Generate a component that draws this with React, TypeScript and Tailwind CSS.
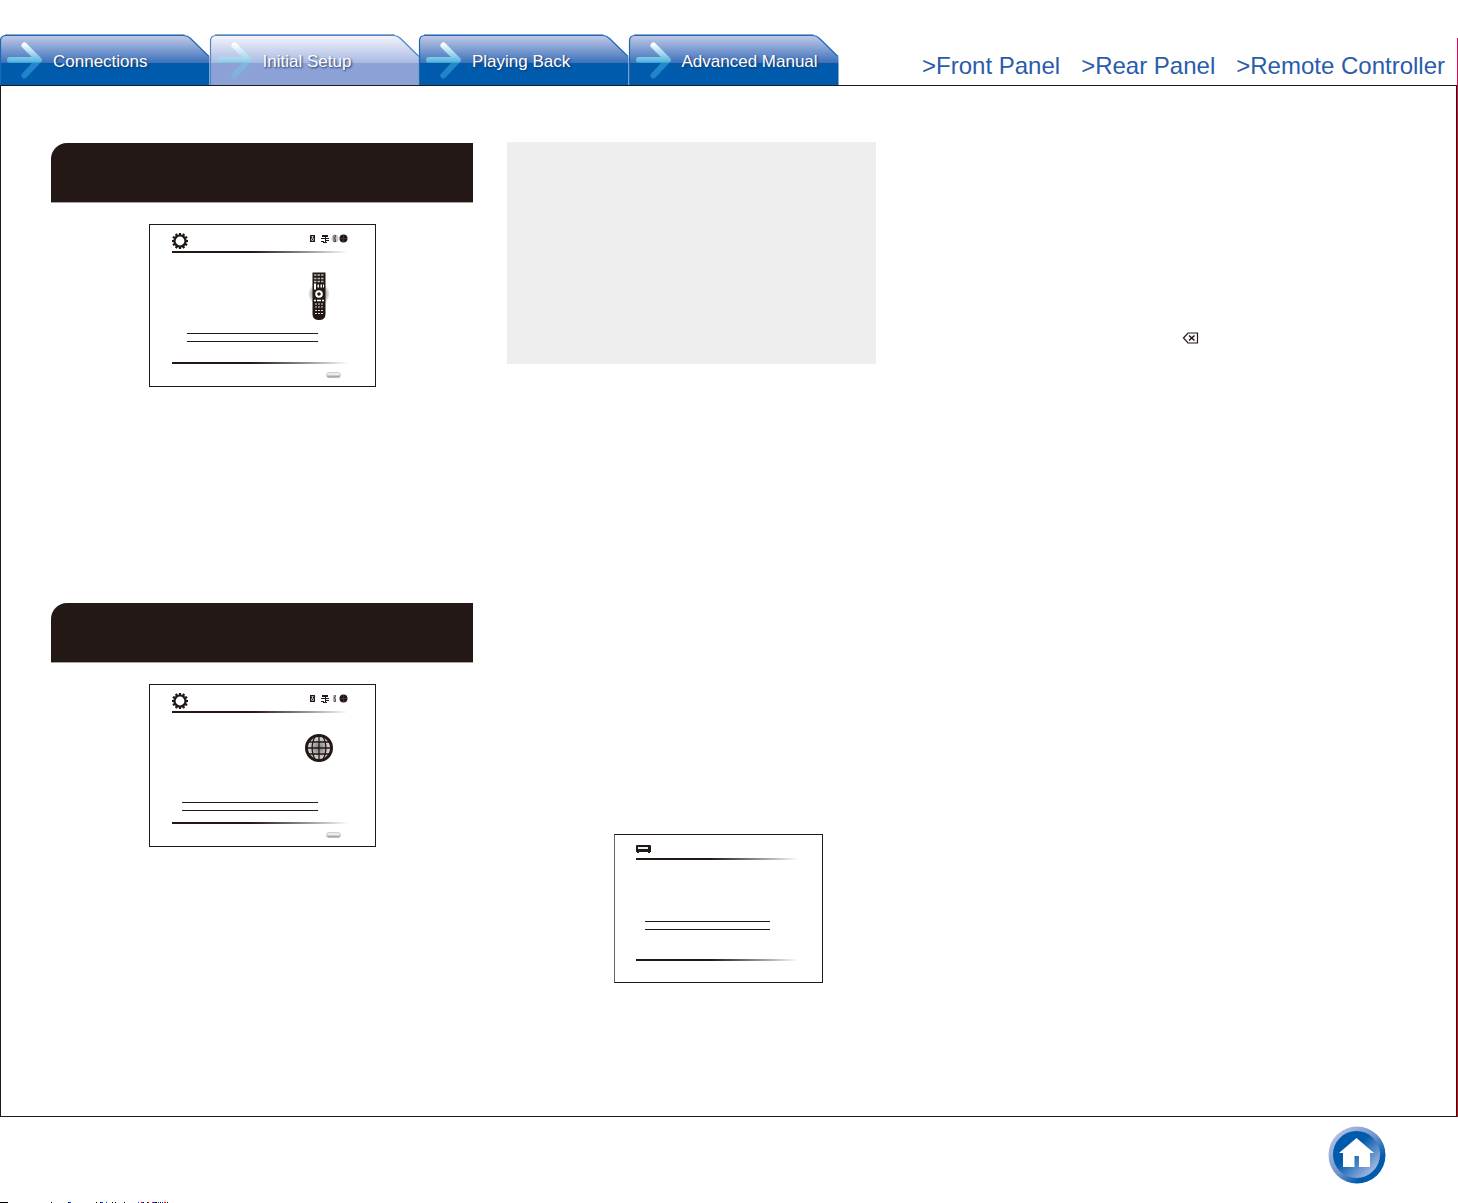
import React from 'react';

const INK = '#231815';

interface TabProps {
  id: string;
  label: string;
  active?: boolean;
}

const tabs: TabProps[] = [
  { id: 'connections', label: 'Connections' },
  { id: 'setup', label: 'Initial Setup', active: true },
  { id: 'playing', label: 'Playing Back' },
  { id: 'advanced', label: 'Advanced Manual' },
];

const panelLinks = ['Front Panel', 'Rear Panel', 'Remote Controller'];

const Tab: React.FC<TabProps> = ({ id, label, active }) => (
  <a href={`#${id}`} aria-current={active ? 'page' : undefined} className="grid h-[51px] min-w-0 flex-1">
    <svg className="col-start-1 row-start-1 h-full w-full overflow-visible" viewBox="0 0 210 51" preserveAspectRatio="none">
      <defs>
        <linearGradient id={`${id}-bg`} x1="0" y1="0" x2="0" y2="1">
          <stop offset="0" stopColor={active ? '#f4f5fc' : '#c3cae8'} />
          <stop offset="0.56" stopColor={active ? '#a9b9e2' : '#3a70ba'} />
          <stop offset="0.56" stopColor={active ? '#8ca2d6' : '#005bac'} />
          <stop offset="1" stopColor={active ? '#8ca2d6' : '#005bac'} />
        </linearGradient>
        <linearGradient id={`${id}-arrow`} gradientUnits="userSpaceOnUse" x1="0" y1="8" x2="0" y2="45">
          <stop offset="0.05" stopColor="#ffffff" />
          <stop offset="0.55" stopColor={active ? '#8fcbe8' : '#50b4e0'} />
          <stop offset="0.56" stopColor={active ? '#82b5dd' : '#2489cc'} />
          <stop offset="1" stopColor={active ? '#7fb0dc' : '#1e82c8'} />
        </linearGradient>
      </defs>
      <path d="M0 51V7Q0 1.500 6 1.500H184Q188 1.500 191 4.500L210 23V51Z" fill={`url(#${id}-bg)`} />
      <path d="M.5 51V7Q.5 1.500 6 1.500H184Q188 1.500 191 4.500L209.500 22.500" fill="none" stroke={active ? '#4d86c6' : '#1b68b3'} strokeWidth="1.200" />
      <path d="M5 .500H185" stroke="#8da9d6" />
      <path
        d="M10 26H37M24.500 11.500L39 26L24.500 41.500"
        fill="none"
        stroke={`url(#${id}-arrow)`}
        strokeWidth="6"
        strokeLinecap="round"
        strokeLinejoin="round"
      />
    </svg>
    <span className="col-start-1 row-start-1 self-center whitespace-nowrap pt-1 pl-[53px] font-['Liberation_Sans',Arial,sans-serif] text-[17px] leading-5 text-white [text-shadow:1px_1px_2px_#1b3565]">
      {label}
    </span>
  </a>
);

const Gear = () => (
  <svg width="16" height="16" viewBox="-8 -8 16 16">
    <circle r="5.500" fill="none" stroke={INK} strokeWidth="2.200" />
    {Array.from({ length: 12 }, (_, i) => (
      <path key={i} d="M-1.200-6H1.200L1.100-8.200H-1.100Z" fill={INK} transform={`rotate(${i * 30})`} />
    ))}
  </svg>
);

const StepIcons: React.FC<{ remoteActive?: boolean }> = ({ remoteActive }) => (
  <svg width="39" height="11" viewBox="0 -1 39 11">
    {/* speaker */}
    <path d="M1 1h5v7H1z" fill={INK} />
    <path d="M2.500 2.500h2M2.500 4.500h2M2.500 6.500h2M3.500 3v1M2.500 5v1M4.500 5v1" stroke="#fff" strokeWidth=".7" fill="none" />
    {/* plug */}
    <path d="M13 1h6v2h-6zM12 4h8v1h-8zM12 7h3v1h-3zM14 8h4v1h-4z" fill={INK} />
    <path d="M16.500 3v6M17 6.500h3" stroke={INK} />
    {/* remote */}
    {remoteActive && <ellipse cx="26" cy="4.500" rx="3.500" ry="4" fill="#c8c8c8" />}
    <path d="M24.500 1h2.500v7h-2.500z" fill={remoteActive ? '#55504e' : '#666'} />
    <path d="M25 2h1M26 4h1M25 6h1" stroke="#fff" strokeWidth=".7" />
    {/* network */}
    <circle cx="34.500" cy="4.500" r="4" fill={INK} />
    <path d="M31 4.500h7M34.500 1v7" stroke="#4d4340" strokeWidth=".6" />
  </svg>
);

const Remote = () => (
  <svg width="22" height="50" viewBox="0 0 22 50">
    <defs>
      <radialGradient id="glow">
        <stop offset="0.5" stopColor="#999" />
        <stop offset="1" stopColor="#eee" />
      </radialGradient>
    </defs>
    <circle cx="11" cy="23" r="10.500" fill="url(#glow)" />
    <path d="M4.500 1.500h13V43q0 6-6.500 6T4.500 43Z" fill={INK} />
    <path d="M6 4h10M6 7.500h10M6 10.500h10" stroke="#bbb" strokeWidth="1.500" strokeDasharray="2.500 1" />
    <path d="M6 14h2M6 17h2M9.500 15h1.500M12.500 15h1.500M15 15h1" stroke="#fff" strokeWidth="3" />
    <circle cx="11" cy="23" r="2.800" fill="none" stroke="#fff" strokeWidth="2" />
    <path d="M6 29.500h2M9 29.500h4M14 29.500h2" stroke="#fff" strokeWidth="1.500" />
    <path d="M7 33h8M7 36h8M7 39.500h8M7 42.500h8" stroke="#ddd" strokeWidth="1.200" strokeDasharray="2 1" />
  </svg>
);

const Globe = () => (
  <svg width="28" height="28" viewBox="0 0 28 28">
    <defs>
      <radialGradient id="globe">
        <stop offset="0" stopColor="#777" />
        <stop offset="1" stopColor="#e8e8e8" />
      </radialGradient>
    </defs>
    <circle cx="14" cy="14" r="12.500" fill="url(#globe)" stroke={INK} strokeWidth="3" />
    <path
      d="M14 2v24M2 14h24M4 8h20M4 20h20M10.500 2C6 9 6 19 10.500 26M17.500 2C22 9 22 19 17.500 26"
      fill="none"
      stroke={INK}
      strokeWidth="1.300"
    />
  </svg>
);

const Receiver = () => (
  <svg width="15" height="9" viewBox="0 0 15 9">
    <path d="M0 1Q0 0 1 0H14Q15 0 15 1V7H14V8H12V7H3V8H1V7H0Z" fill={INK} />
    <path d="M2 2h10v2H2z" fill="#eee" />
  </svg>
);

const Pill = () => (
  <svg width="15" height="7" viewBox="0 0 15 7">
    <defs>
      <linearGradient id="pill" x1="0" y1="0" x2="0" y2="1">
        <stop offset="0.4" stopColor="#eee" />
        <stop offset="1" stopColor="#888" />
      </linearGradient>
    </defs>
    <rect x=".5" y=".5" width="14" height="5" rx="2.500" fill="url(#pill)" stroke="#b5b5b5" strokeWidth=".6" />
  </svg>
);

const Rule = () => <div className="h-[2px] bg-linear-to-r from-[#231815] from-45% to-white" />;

const Banner = () => <div className="h-[60px] rounded-tl-2xl border-b border-[#a8a2a0] bg-[#231815]" />;

const SetupScreen: React.FC<{ network?: boolean }> = ({ network }) => (
  <div className="mx-auto mt-[21px] flex h-[163px] w-[227px] flex-col border border-[#231815] pt-2 pr-[27px] pl-[22px]">
    <div className="flex h-[18px] items-start justify-between">
      <Gear />
      <StepIcons remoteActive={!network} />
    </div>
    <Rule />
    {network ? (
      <>
        <div className="mt-[21px] mr-[15px] flex justify-end"><Globe /></div>
        <div className="mt-10 mr-[30px] ml-[10px] h-[9px] border-y border-[#231815]" />
        <div className="mt-[11px]"><Rule /></div>
      </>
    ) : (
      <>
        <div className="mt-[18px] mr-[18px] flex justify-end"><Remote /></div>
        <div className="mt-3 mr-[30px] ml-[15px] h-[9px] border-y border-[#231815]" />
        <div className="mt-5"><Rule /></div>
      </>
    )}
    <div className="mt-2 mr-[7px] flex justify-end"><Pill /></div>
  </div>
);

const ReceiverScreen = () => (
  <div className="mt-[470px] mr-[53px] ml-auto h-[149px] w-[209px] border border-[#231815] border-l-[#666] pt-[10px] pr-[24px] pl-[21px]">
    <div className="flex h-[13px] items-start"><Receiver /></div>
    <Rule />
    <div className="mt-[61px] mr-[28px] ml-[9px] h-[9px] border-y border-[#231815]" />
    <div className="mt-[29px]"><Rule /></div>
  </div>
);

const Backspace = () => (
  <svg className="mt-[190px] ml-[272px]" width="17" height="12" viewBox="0 0 17 12">
    <path d="M1.500 6L6 1H15.500V11H6Z" fill="none" stroke={INK} strokeWidth="1.200" />
    <path d="M7 3.500L12.500 8.500M12.500 3.500L7 8.500" stroke={INK} strokeWidth="1.600" />
  </svg>
);

const HomeButton = () => (
  <button type="button" aria-label="Home" className="cursor-pointer">
    <svg width="58" height="58" viewBox="0 0 58 58">
      <defs>
        <linearGradient id="ring" x1="0.1" y1="0.1" x2="0.9" y2="0.9">
          <stop offset="0" stopColor="#b5c2e6" />
          <stop offset="0.5" stopColor="#6f91cb" />
          <stop offset="0.8" stopColor="#005bac" />
        </linearGradient>
        <linearGradient id="face" x1="0.1" y1="0.1" x2="0.9" y2="0.9">
          <stop offset="0.4" stopColor="#005bac" />
          <stop offset="1" stopColor="#b5c2e6" />
        </linearGradient>
      </defs>
      <circle cx="29" cy="29" r="28.500" fill="url(#ring)" />
      <circle cx="28.500" cy="28.500" r="23.500" fill="url(#face)" />
      <path d="M28.500 12L46 27H42V41H31V30H26.500V41H15V27H11Z" fill="#fff" />
    </svg>
  </button>
);

const App: React.FC = () => {
  return (
    <div className="bg-white font-['Liberation_Sans',Arial,sans-serif] pt-[34px]">
      <div className="flex">
        <div className="min-w-0 flex-1">
          <header className="flex items-end justify-between">
            <nav className="flex w-[838px]">
              {tabs.map((tab) => (
                <Tab key={tab.id} {...tab} />
              ))}
            </nav>
            <nav className="flex gap-[21px] pr-3 pb-[3px] text-2xl leading-8 text-[#2a5caa]">
              {panelLinks.map((link) => (
                <a key={link} href="#panel" className="whitespace-nowrap">&gt;{link}</a>
              ))}
            </nav>
          </header>

          <main className="grid grid-cols-[422fr_369fr_496fr] gap-x-[34px] border border-[#231815] px-[50px] pt-14 pb-[133px]">
            <div className="pt-px">
              <Banner />
              <SetupScreen />
              <div className="mt-[216px]"><Banner /></div>
              <SetupScreen network />
            </div>
            <div>
              <div className="h-[222px] bg-[#eeeeee]" />
              <ReceiverScreen />
            </div>
            <div>
              <Backspace />
            </div>
          </main>
        </div>
        <div className="mt-1 w-px bg-linear-to-b from-[#e4005f] to-[#e60012] to-10%" />
      </div>

      <footer>
        <div className="flex h-[85px] items-start justify-end pt-[9px] pr-[72px]">
          <HomeButton />
        </div>
        <svg className="block" width="170" height="1" viewBox="0 0 170 1">
          <path d="M0 .500H8M51 .500h1M68 .500h1M96 .500h1M100 .500h1M112 .500h1M115 .500h1M124 .500h1M143 .500h1M147 .500h1M155 .500h2M160 .500h1M167 .500h1" stroke="#000" />
          <path d="M69 .500h2M101 .500h2M106 .500h1M138 .500h1M142 .500h1M153 .500h2M158 .500h1M162 .500h1" stroke="#2233dd" />
          <path d="M141 .500h1M148 .500h1M152 .500h1M164 .500h2" stroke="#d22" />
        </svg>
      </footer>
    </div>
  );
};

export default App;
